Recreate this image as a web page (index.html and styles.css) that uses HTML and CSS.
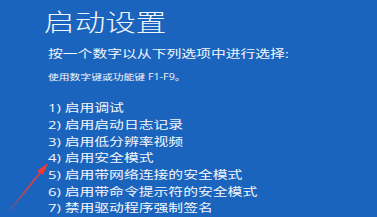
FILE: index.html
```html
<!DOCTYPE html>
<html lang="zh-CN">

<head>
  <meta charset="UTF-8">
  <meta name="viewport" content="width=device-width, initial-scale=1.0">
  <title>启动设置</title>
  <link rel="stylesheet" href="styles.css">
</head>

<body>
  <div class="screen">
    <div class="content">
      <h1 class="title">启动设置</h1>
      <p class="prompt">按一个数字以从下列选项中进行选择:</p>
      <p class="hint">使用数字键或功能键 F1-F9。</p>
      <ol class="options">
        <li>1) 启用调试</li>
        <li>2) 启用启动日志记录</li>
        <li>3) 启用低分辨率视频</li>
        <li>4) 启用安全模式</li>
        <li>5) 启用带网络连接的安全模式</li>
        <li>6) 启用带命令提示符的安全模式</li>
        <li class="last">7) 禁用驱动程序强制签名</li>
      </ol>
    </div>
    <svg class="arrow" width="60" height="70" viewBox="0 0 60 70">
      <defs>
        <linearGradient id="fade" x1="0" y1="1" x2="1" y2="0">
          <stop offset="0" stop-color="#e8413a" stop-opacity="0.2" />
          <stop offset="0.5" stop-color="#ee3b35" stop-opacity="0.9" />
          <stop offset="1" stop-color="#f03a33" />
        </linearGradient>
      </defs>
      <line x1="6" y1="60" x2="40" y2="18" stroke="url(#fade)" stroke-width="1.6" stroke-linecap="round" />
      <polygon points="44,13 33,21 39,25" fill="#f03a33" />
    </svg>
  </div>
</body>

</html>
```

FILE: styles.css
```css
html,
body {
  margin: 0;
  width: 100%;
  height: 100%;
  background-color: #1a64bd;
  overflow: hidden;
}

.screen {
  position: relative;
  width: 377px;
  height: 217px;
  padding-left: 48px;
  box-sizing: border-box;
  overflow: hidden;
  font-family: "Open Sans", "Noto Sans CJK SC", sans-serif;
  color: #f3f6fb;
}

/* the shot is stretched sideways, so the text block is too */
.content {
  width: 253px;
  transform: scaleX(1.3);
  transform-origin: left top;
  padding-top: 7px;
}

.title {
  margin: 0 0 0 -3px;
  font-family: "Noto Sans CJK SC", sans-serif;
  font-size: 23.5px;
  font-weight: 300;
  line-height: 28px;
}

.prompt {
  margin: 11px 0 0;
  font-size: 11.4px;
  line-height: 16px;
}

.hint {
  margin: 9px 0 0;
  font-size: 8.3px;
  line-height: 12px;
}

.options {
  list-style: none;
  margin: 17px 0 0;
  padding: 0;
  font-size: 11.4px;
  line-height: 16.8px;
}

.options .last {
  line-height: 13px;
}

.arrow {
  position: absolute;
  left: 4px;
  top: 150px;
}
```
